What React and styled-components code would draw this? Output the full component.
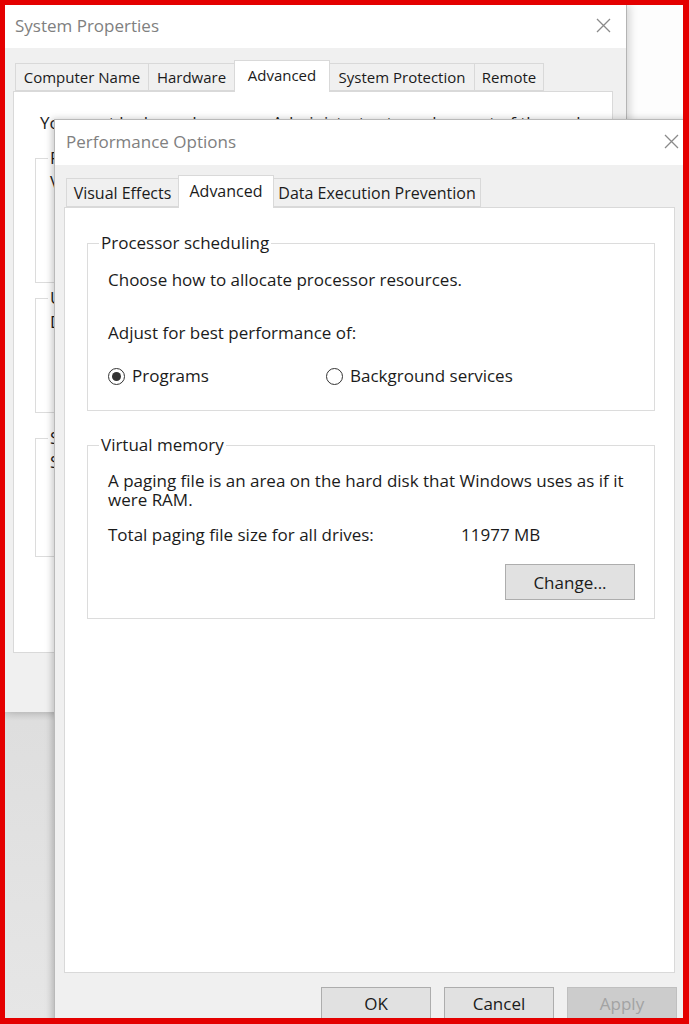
import styled, { createGlobalStyle } from 'styled-components';

const GlobalStyle = createGlobalStyle`
  body {
    margin: 0;
    background: #ffffff;
    font-family: "Open Sans", "Noto Sans", sans-serif;
    color: #1b1b1b;
  }
`;

const sysTabs = [
  { label: 'Computer Name', w: 134 },
  { label: 'Hardware', w: 87 },
  { label: 'Advanced', w: 96, active: true },
  { label: 'System Protection', w: 146 },
  { label: 'Remote', w: 70 },
];

const perfTabs = [
  { label: 'Visual Effects', w: 113 },
  { label: 'Advanced', w: 96, active: true },
  { label: 'Data Execution Prevention', w: 208 },
];

const sysGroups = [
  { title: 'Performance', text: 'Visual effects, processor scheduling, memory usage, and virtual memory', h: 136, top: 13 },
  { title: 'User Profiles', text: 'Desktop settings related to your sign-in', h: 126, top: 4 },
  { title: 'Startup and Recovery', text: 'System startup, system failure, and debugging information', h: 130, top: 14 },
];

function CloseIcon() {
  return (
    <svg width="15" height="15" viewBox="0 0 15 15">
      <path d="M1 1 L14 14 M14 1 L1 14" stroke="#8a8a8a" strokeWidth="1.3" fill="none" />
    </svg>
  );
}

export default function App() {
  return (
    <>
      <GlobalStyle />
      <Frame>
        <SysWindow>
          <TitleBar $h={43} $left={10} $right={15}>
            <Title>System Properties</Title>
            <CloseIcon />
          </TitleBar>
          <SysBody>
            <TabStrip>
              {sysTabs.map((t) => (
                <Tab key={t.label} $w={t.w} $h={t.active ? 31 : 28} $size={15} $active={t.active}>
                  {t.label}
                </Tab>
              ))}
            </TabStrip>
            <SysPanel>
              <Notice>You must be logged on as an Administrator to make most of these changes.</Notice>
              {sysGroups.map((g) => (
                <SysGroup key={g.title} $h={g.h} $top={g.top}>
                  <SysLegend>{g.title}</SysLegend>
                  <SysGroupText>{g.text}</SysGroupText>
                </SysGroup>
              ))}
            </SysPanel>
          </SysBody>
        </SysWindow>

        <PerfWindow>
          <TitleBar $h={45} $left={11} $right={14}>
            <Title>Performance Options</Title>
            <CloseIcon />
          </TitleBar>
          <PerfBody>
            <TabStrip>
              {perfTabs.map((t) => (
                <Tab key={t.label} $w={t.w} $h={t.active ? 32 : 29} $size={16} $active={t.active}>
                  {t.label}
                </Tab>
              ))}
            </TabStrip>
            <PerfPanel>
              <Group>
                <Legend>Processor scheduling</Legend>
                <Line $top={15}>Choose how to allocate processor resources.</Line>
                <Line $top={31}>Adjust for best performance of:</Line>
                <RadioRow>
                  <RadioItem>
                    <Radio $checked />
                    Programs
                  </RadioItem>
                  <RadioItem>
                    <Radio />
                    Background services
                  </RadioItem>
                </RadioRow>
              </Group>
              <Group $top={23} $bottom={18}>
                <Legend>Virtual memory</Legend>
                <Para>
                  A paging file is an area on the hard disk that Windows uses as if it
                  <br />
                  were RAM.
                </Para>
                <SizeRow>
                  <span>Total paging file size for all drives:</span>
                  <span>11977 MB</span>
                </SizeRow>
                <ButtonEnd>
                  <Button $w={130} $h={36}>Change...</Button>
                </ButtonEnd>
              </Group>
            </PerfPanel>
            <ButtonRow>
              <Button $w={110} $h={32}>OK</Button>
              <Button $w={110} $h={32}>Cancel</Button>
              <Button $w={110} $h={32} $disabled>Apply</Button>
            </ButtonRow>
          </PerfBody>
        </PerfWindow>
      </Frame>
    </>
  );
}

const Frame = styled.div`
  position: relative;
  box-sizing: border-box;
  width: 689px;
  height: 1024px;
  border-style: solid;
  border-color: #e40000;
  border-width: 5px 6px 6px 5px;
  overflow: hidden;
  background: linear-gradient(
    to bottom,
    #fdfdfd 0,
    #fdfdfd 707px,
    #cfcfcf 707px,
    #dedede 716px,
    #e6e6e6 100%
  );
`;

const SysWindow = styled.div`
  position: absolute;
  left: 0;
  top: 0;
  width: 622px;
  height: 707px;
  box-sizing: border-box;
  background: #f0f0f0;
  border-right: 1px solid #b4b4b4;
  box-shadow: 3px 0 8px rgba(0, 0, 0, 0.16);
  display: flex;
  flex-direction: column;
`;

const TitleBar = styled.div`
  box-sizing: border-box;
  height: ${(p) => p.$h}px;
  flex-shrink: 0;
  background: #ffffff;
  display: flex;
  align-items: center;
  justify-content: space-between;
  padding: 0 ${(p) => p.$right}px 3px ${(p) => p.$left}px;
`;

const Title = styled.span`
  font-size: 17px;
  color: #808080;
`;

const SysBody = styled.div`
  padding: 12px 8px 0 8px;
  display: flex;
  flex-direction: column;
`;

const TabStrip = styled.div`
  display: flex;
  align-items: flex-end;
  padding-left: 2px;
  position: relative;
  z-index: 1;
`;

const Tab = styled.div`
  box-sizing: border-box;
  width: ${(p) => p.$w}px;
  height: ${(p) => p.$h + (p.$active ? 1 : 0)}px;
  margin-bottom: ${(p) => (p.$active ? -1 : 0)}px;
  margin-left: -1px;
  display: flex;
  align-items: center;
  justify-content: center;
  padding-bottom: ${(p) => (p.$active ? 3 : 0)}px;
  font-size: ${(p) => p.$size}px;
  color: #1b1b1b;
  white-space: nowrap;
  background: ${(p) => (p.$active ? '#ffffff' : '#f0f0f0')};
  border: 1px solid #d9d9d9;
  border-bottom: ${(p) => (p.$active ? 'none' : '1px solid #d9d9d9')};
  position: relative;
  z-index: ${(p) => (p.$active ? 2 : 1)};

  &:first-child {
    margin-left: 0;
  }
`;

const SysPanel = styled.div`
  box-sizing: border-box;
  width: 600px;
  height: 562px;
  background: #ffffff;
  border: 1px solid #d9d9d9;
  padding: 20px 0 0 21px;
  display: flex;
  flex-direction: column;
  overflow: hidden;
`;

const Notice = styled.div`
  font-size: 17px;
  line-height: 22px;
  margin-left: 5px;
  white-space: nowrap;
`;

const SysGroup = styled.fieldset`
  box-sizing: border-box;
  margin: ${(p) => p.$top}px 22px 0 0;
  height: ${(p) => p.$h}px;
  padding: 2px 14px 0 14px;
  border: 1px solid #dcdcdc;
  min-width: 0;
`;

const SysLegend = styled.legend`
  font-size: 17px;
  line-height: 22px;
  padding: 0 2px;
  margin-left: -2px;
`;

const SysGroupText = styled.div`
  font-size: 17px;
  line-height: 22px;
  white-space: nowrap;
`;

const PerfWindow = styled.div`
  position: absolute;
  left: 49px;
  top: 114px;
  width: 640px;
  height: 920px;
  box-sizing: border-box;
  background: #f0f0f0;
  border: 1px solid #b9b9b9;
  box-shadow: -2px 0 7px rgba(0, 0, 0, 0.22);
  display: flex;
  flex-direction: column;
`;

const PerfBody = styled.div`
  padding: 10px 0 0 9px;
  display: flex;
  flex-direction: column;
`;

const PerfPanel = styled.div`
  box-sizing: border-box;
  width: 611px;
  height: 766px;
  background: #ffffff;
  border: 1px solid #d9d9d9;
  padding: 24px 19px 0 22px;
  display: flex;
  flex-direction: column;
`;

const Group = styled.fieldset`
  margin: ${(p) => p.$top || 0}px 0 0 0;
  padding: 0 19px ${(p) => (p.$bottom != null ? p.$bottom : 23)}px 20px;
  border: 1px solid #dcdcdc;
  min-width: 0;
  display: flex;
  flex-direction: column;
  font-size: 17px;
`;

const Legend = styled.legend`
  font-size: 17px;
  line-height: 22px;
  padding: 0 2px;
  margin-left: -9px;
  color: #1b1b1b;
`;

const Line = styled.div`
  margin-top: ${(p) => p.$top}px;
  line-height: 22px;
`;

const RadioRow = styled.div`
  margin-top: 21px;
  display: flex;
  height: 22px;
  align-items: center;
`;

const RadioItem = styled.label`
  width: 218px;
  display: flex;
  align-items: center;
  gap: 7px;
  line-height: 22px;
`;

const Radio = styled.span`
  box-sizing: border-box;
  width: 17px;
  height: 17px;
  border-radius: 50%;
  border: 1px solid #333333;
  background: #ffffff;
  display: flex;
  align-items: center;
  justify-content: center;

  &::after {
    content: '';
    width: 9px;
    height: 9px;
    border-radius: 50%;
    background: ${(p) => (p.$checked ? '#333333' : 'transparent')};
  }
`;

const Para = styled.div`
  margin-top: 15px;
  line-height: 19px;
  white-space: nowrap;
`;

const SizeRow = styled.div`
  margin-top: 15px;
  display: grid;
  grid-template-columns: 353px auto;
  line-height: 22px;
`;

const ButtonEnd = styled.div`
  margin-top: 18px;
  display: flex;
  justify-content: flex-end;
`;

const Button = styled.button`
  box-sizing: border-box;
  width: ${(p) => p.$w}px;
  height: ${(p) => p.$h}px;
  font-family: "Open Sans", "Noto Sans", sans-serif;
  font-size: 17px;
  color: ${(p) => (p.$disabled ? '#a3a3a3' : '#1b1b1b')};
  background: ${(p) => (p.$disabled ? '#cccccc' : '#e1e1e1')};
  border: 1px solid ${(p) => (p.$disabled ? '#bfbfbf' : '#adadad')};
  border-radius: 0;
  padding: 0;
`;

const ButtonRow = styled.div`
  margin-top: 14px;
  width: 613px;
  display: flex;
  justify-content: flex-end;
  gap: 13px;
`;
